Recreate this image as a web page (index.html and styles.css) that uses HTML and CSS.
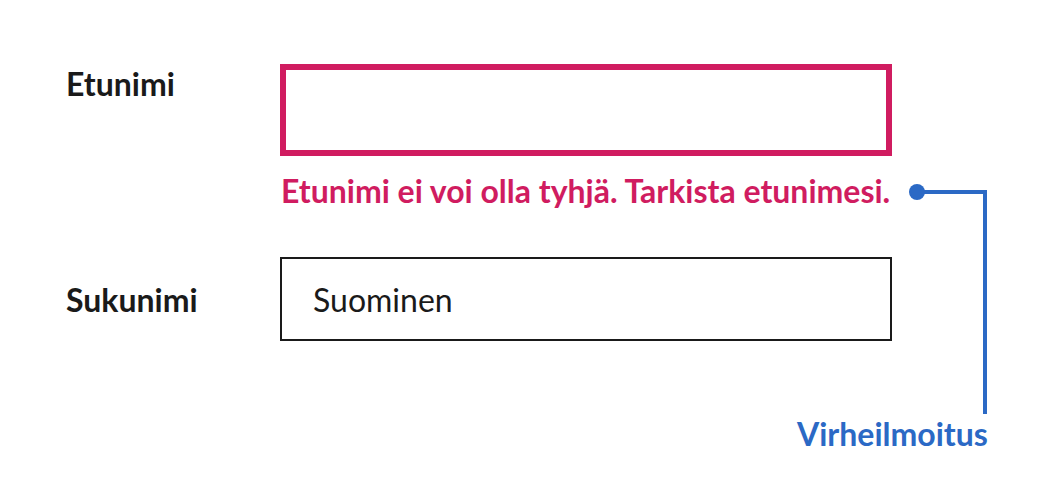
FILE: index.html
```html
<!DOCTYPE html>
<html lang="fi">
<head>
<meta charset="utf-8">
<title>Virheilmoitus</title>
<link rel="stylesheet" href="styles.css">
</head>
<body>
<div class="page">
  <form class="form">
    <label class="label label-first" for="etunimi">Etunimi</label>
    <div class="field">
      <input id="etunimi" class="input input-error" type="text" value="">
      <p class="error">Etunimi ei voi olla tyhjä. Tarkista etunimesi.</p>
    </div>
    <label class="label label-second" for="sukunimi">Sukunimi</label>
    <div class="field">
      <input id="sukunimi" class="input" type="text" value="Suominen">
    </div>
  </form>
  <svg class="pointer" width="1050" height="500" viewBox="0 0 1050 500" aria-hidden="true">
    <path d="M917 192 H985 V414" fill="none" stroke="#2b69c5" stroke-width="4"/>
    <circle cx="917" cy="192" r="8" fill="#2b69c5"/>
  </svg>
  <span class="annotation">Virheilmoitus</span>
</div>
</body>
</html>
```

FILE: styles.css
```css
html, body {
  margin: 0;
  padding: 0;
  background: #ffffff;
}
body {
  font-family: Lato, "Noto Sans", sans-serif;
  color: #1a1a1a;
}
.page {
  position: relative;
  width: 1050px;
  height: 500px;
  padding: 64px 0 0 66px;
  box-sizing: border-box;
}
.form {
  display: grid;
  grid-template-columns: 214px 612px;
  margin: 0;
}
.label {
  font-size: 32px;
  font-weight: 700;
  line-height: 1.2;
  color: #1a1a1a;
}
.label-first {
  margin-top: 1px;
}
.label-second {
  margin-top: 24px;
}
.field {
  display: flex;
  flex-direction: column;
}
.input {
  box-sizing: border-box;
  width: 612px;
  height: 84px;
  margin: 0;
  padding: 0 30px 0 31px;
  border: 2px solid #1a1a1a;
  border-radius: 0;
  background: #fff;
  font-family: Lato, "Noto Sans", sans-serif;
  font-size: 32px;
  color: #1a1a1a;
  outline: none;
}
.input-error {
  height: 92px;
  border: 6px solid #d01c60;
}
.error {
  margin: 16px 0 47px 1px;
  font-size: 32px;
  font-weight: 700;
  line-height: 1.2;
  color: #d01c60;
}
.pointer {
  position: absolute;
  left: 0;
  top: 0;
}
.annotation {
  position: absolute;
  left: 797px;
  top: 415px;
  font-size: 32px;
  font-weight: 700;
  line-height: 1.2;
  color: #2b69c5;
}
```
